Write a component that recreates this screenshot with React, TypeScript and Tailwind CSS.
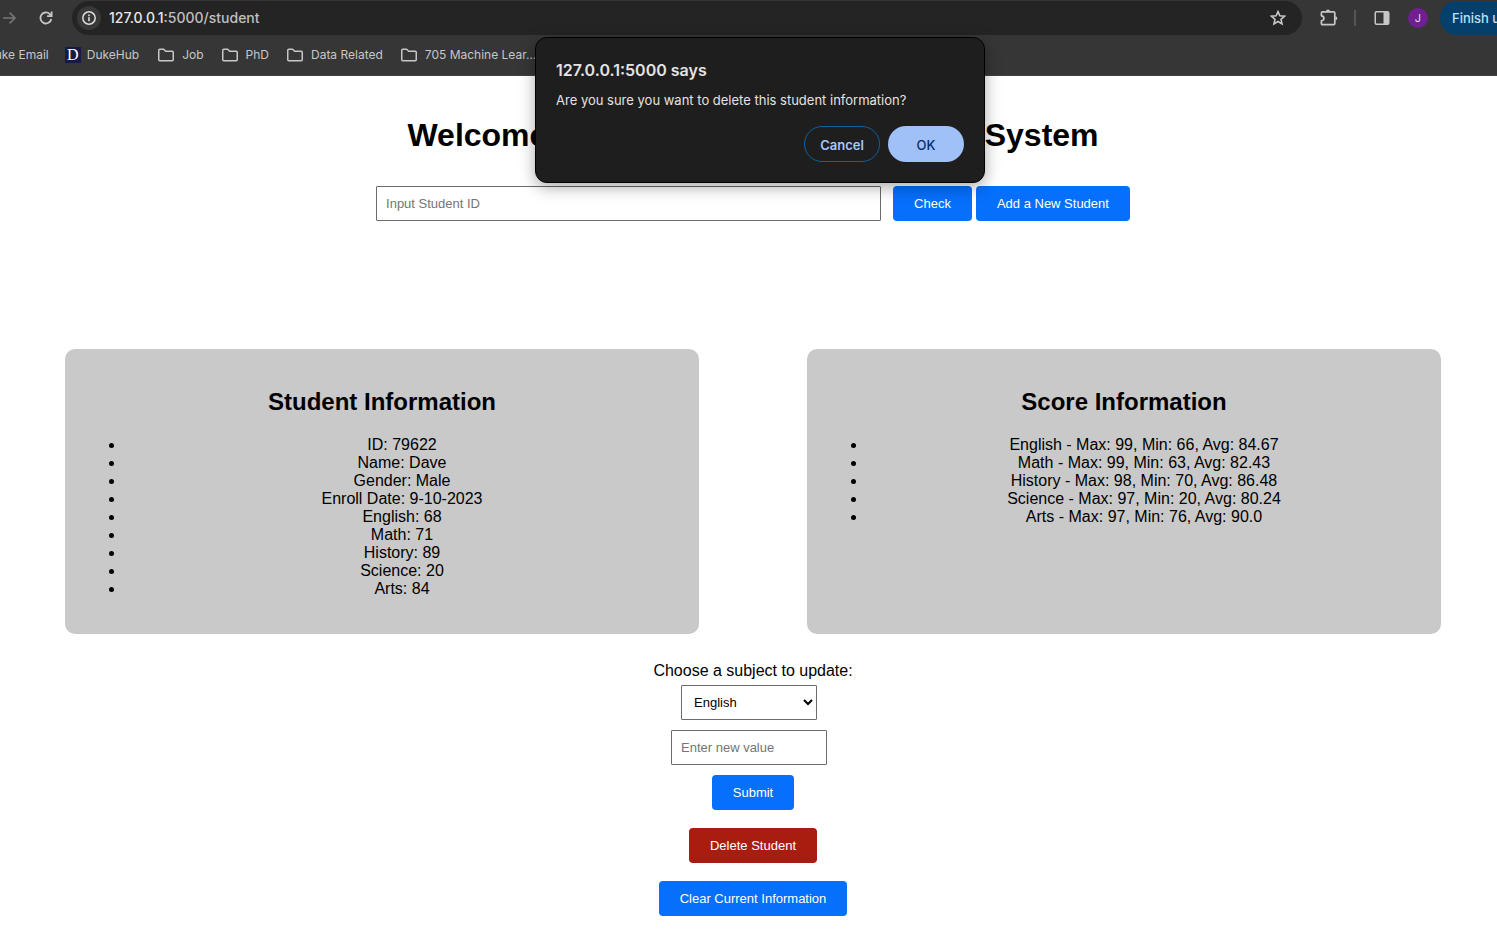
import type { ReactNode } from "react";

const chromeFont = "font-['Inter','Roboto',sans-serif]";

const studentInfo = [
  "ID: 79622",
  "Name: Dave",
  "Gender: Male",
  "Enroll Date: 9-10-2023",
  "English: 68",
  "Math: 71",
  "History: 89",
  "Science: 20",
  "Arts: 84",
];

const scoreInfo = [
  "English - Max: 99, Min: 66, Avg: 84.67",
  "Math - Max: 99, Min: 63, Avg: 82.43",
  "History - Max: 98, Min: 70, Avg: 86.48",
  "Science - Max: 97, Min: 20, Avg: 80.24",
  "Arts - Max: 97, Min: 76, Avg: 90.0",
];

const folders = ["Job", "PhD", "Data Related", "705 Machine Lear…"];

function FolderIcon() {
  return (
    <svg width="18" height="14" viewBox="0 0 18 14" fill="none" stroke="currentColor" strokeWidth="1.5" aria-hidden="true">
      <path d="M1.75 2.2q0-1 1-1h3.9l2 2h6.6q1 0 1 1v7.6q0 1-1 1H2.75q-1 0-1-1z" strokeLinejoin="round" />
    </svg>
  );
}

function BrowserBar() {
  return (
    <header className={`overflow-hidden border-b border-[#453f40] bg-[#363636] text-[#c7c7c7] ${chromeFont}`}>
      <div className="flex h-9 items-center">
        <button aria-label="Forward" className="w-[18px] shrink-0 text-[#777777]">
          <svg width="18" height="18" viewBox="0 0 18 18" fill="none" stroke="currentColor" strokeWidth="1.6">
            <path d="M3 9h12M9.6 3.6 15 9l-5.4 5.4" />
          </svg>
        </button>
        <button aria-label="Reload" className="ml-[19px] w-[18px] shrink-0">
          <svg width="18" height="18" viewBox="0 0 18 18" fill="none" stroke="currentColor" strokeWidth="1.8">
            <path d="M14.3 10a5.5 5.5 0 1 1-1.5-4.9L14 6.3" />
            <path d="M14.6 2.6v4.5h-4.5" />
          </svg>
        </button>
        <div className="ml-[17px] flex h-[34px] min-w-0 flex-1 items-center rounded-full bg-[#242424] pr-4 pl-[5px]">
          <button aria-label="Site information" className="flex h-6 w-6 shrink-0 items-center justify-center rounded-full bg-[#383838] text-[#dddddd]">
            <svg width="16" height="16" viewBox="0 0 16 16" fill="none" stroke="currentColor" strokeWidth="1.5">
              <circle cx="8" cy="8" r="6.2" />
              <path d="M8 7.2v4.1M8 4.6v1.6" strokeWidth="1.6" />
            </svg>
          </button>
          <span className="ml-2 flex-1 text-sm font-medium text-[#c0c0c0]">
            <span className="text-[#e8e8e8]">127.0.0.1</span>:5000/student
          </span>
          <button aria-label="Bookmark this tab">
            <svg width="16" height="16" viewBox="0 0 16 16" fill="none" stroke="currentColor" strokeWidth="1.6">
              <path d="m8 1.6 1.85 4.25 4.65.43-3.5 3.1 1.03 4.55L8 11.55l-4.03 2.38L5 9.38l-3.5-3.1 4.65-.43z" />
            </svg>
          </button>
        </div>
        <button aria-label="Extensions" className="ml-[17px] shrink-0">
          <svg width="20" height="20" viewBox="0 0 20 20" fill="none" stroke="currentColor" strokeWidth="1.7">
            <path d="M3.4 3.9h11.4q1 0 1 1v10.7q0 1-1 1H3.4q-1 0-1-1v-2.8c1.7-.2 2.5-1.2 2.5-2.5s-.8-2.3-2.5-2.5V4.9q0-1 1-1z" strokeLinejoin="round" />
            <path d="M7 3.4a2 2 0 0 1 4 0zM16.3 8.2a2 2 0 0 1 0 4z" fill="currentColor" stroke="none" />
          </svg>
        </button>
        <span className="ml-[15px] h-4 w-0.5 shrink-0 bg-[#555555]" />
        <button aria-label="Side panel" className="ml-[18px] shrink-0">
          <svg width="16" height="16" viewBox="0 0 16 16" fill="none" stroke="currentColor" strokeWidth="1.5">
            <rect x="1.25" y="1.75" width="13.5" height="12.5" rx="1.2" />
            <path d="M9.5 2h5v12h-5z" fill="currentColor" stroke="none" />
          </svg>
        </button>
        <button className="ml-[18px] flex h-5 w-5 shrink-0 items-center justify-center rounded-full bg-[#6f1f91] text-[11px] text-[#e6d3ee]">J</button>
        <button className="ml-3 h-[34px] w-[57px] shrink-0 overflow-hidden rounded-l-full bg-[#04406b] pt-px pl-3 text-left text-[13px] font-medium whitespace-nowrap text-[#b9e0fb]">
          Finish update
        </button>
      </div>
      <nav aria-label="Bookmarks" className="flex h-[39px] items-center pb-0.5 text-xs whitespace-nowrap">
        <a href="#email" className="-ml-3.5">Duke Email</a>
        <a href="#hub" className="ml-4 flex items-center gap-1.5">
          <span className="flex h-4 w-4 items-center justify-center bg-[#151a4a] font-['Liberation_Serif',serif] text-base leading-4 text-white">D</span>
          DukeHub
        </a>
        <div className="ml-[18px] flex gap-[17px]">
          {folders.map((name) => (
            <a key={name} href="#folder" className="flex items-center gap-[7px]">
              <FolderIcon />
              {name}
            </a>
          ))}
        </div>
      </nav>
    </header>
  );
}

function InfoCard({ title, items }: { title: string; items: string[] }) {
  return (
    <section className="rounded-[10px] bg-[#c9c9c9] px-5 pt-[39px] pb-9">
      <h2 className="text-2xl leading-[27px] font-bold">{title}</h2>
      <ul className="mt-[21px] list-disc pl-10 text-base leading-[18px]">
        {items.map((item) => (
          <li key={item}>{item}</li>
        ))}
      </ul>
    </section>
  );
}

function ActionButton({ children, danger = false }: { children: ReactNode; danger?: boolean }) {
  return (
    <button className={`h-[35px] rounded-[4px] px-[21px] text-[13px] whitespace-nowrap text-white ${danger ? "bg-[#a91d11]" : "bg-[#066ffb]"}`}>
      {children}
    </button>
  );
}

function ConfirmDialog() {
  return (
    <div className={`absolute inset-x-0 top-[37px] flex justify-center pl-[23px] ${chromeFont}`}>
      <div role="alertdialog" aria-labelledby="dialog-title" aria-describedby="dialog-text" className="w-[450px] rounded-xl border border-black bg-[#1e1e1e] p-5 text-[#e3e3e3] shadow-[0_4px_16px_rgba(0,0,0,0.35)]">
        <h2 id="dialog-title" className="text-base leading-6 font-semibold">127.0.0.1:5000 says</h2>
        <p id="dialog-text" className="mt-2 text-[13px] leading-5">Are you sure you want to delete this student information?</p>
        <div className="mt-4 flex justify-end gap-2">
          <button className="h-9 w-[76px] rounded-full border border-[#0d6299] pt-px text-[13px] leading-5 font-semibold text-[#a8c7fa]">Cancel</button>
          <button className="h-9 w-[76px] rounded-full bg-[#a0c0f8] pt-px text-[13px] leading-5 font-medium text-[#0b2a66]">OK</button>
        </div>
      </div>
    </div>
  );
}

export default function App() {
  return (
    <div className="relative min-h-screen bg-white font-['Liberation_Sans',Arial,sans-serif] text-black">
      <BrowserBar />
      <main className="pt-10 pb-7 pl-[9px] text-center">
        <h1 className="text-[32px] leading-[39px] font-bold">Welcome to the Student Management System</h1>
        <form className="mt-[31px] flex justify-center" onSubmit={(e) => e.preventDefault()}>
          <input aria-label="Student ID" placeholder="Input Student ID" className="mr-3 h-[35px] w-[505px] min-w-0 rounded-[1px] border border-[#6b6b6b] px-[9px] text-[13px] placeholder:text-[#757575]" />
          <div className="flex gap-1">
            <ActionButton>Check</ActionButton>
            <ActionButton>Add a New Student</ActionButton>
          </div>
        </form>
        <div className="mt-32 grid grid-cols-2 gap-[108px] px-14">
          <InfoCard title="Student Information" items={studentInfo} />
          <InfoCard title="Score Information" items={scoreInfo} />
        </div>
        <form className="mt-7 flex flex-col items-center" onSubmit={(e) => e.preventDefault()}>
          <label htmlFor="subject" className="text-base leading-[18px]">Choose a subject to update:</label>
          <select id="subject" className="mt-[5px] mr-2 h-[35px] w-[136px] rounded-[1px] border border-[#6b6b6b] bg-white px-2 text-[13px]">
            <option>English</option>
            <option>Math</option>
            <option>History</option>
            <option>Science</option>
            <option>Arts</option>
          </select>
          <input aria-label="New value" placeholder="Enter new value" className="mt-2.5 mr-2 mb-2.5 h-[35px] w-[156px] rounded-[1px] border border-[#6b6b6b] px-[9px] text-[13px] placeholder:text-[#757575]" />
          <ActionButton>Submit</ActionButton>
        </form>
        <div className="mt-[18px] flex flex-col items-center gap-[18px]">
          <ActionButton danger>Delete Student</ActionButton>
          <ActionButton>Clear Current Information</ActionButton>
        </div>
      </main>
      <ConfirmDialog />
    </div>
  );
}
